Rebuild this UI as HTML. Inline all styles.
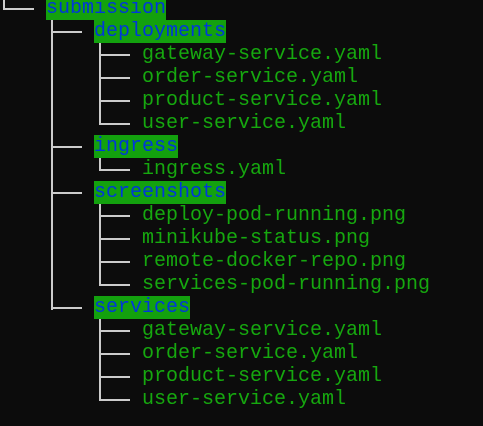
<!DOCTYPE html>
<html><head><meta charset="utf-8"><style>
html,body{margin:0;padding:0;background:#0c0c0c;width:483px;height:426px;overflow:hidden;position:relative}
.t{position:absolute;height:23px;line-height:25px;font:20px "Liberation Mono",monospace;color:#16a80f;white-space:pre}
.d{background:#13a10e;color:#0037da}
.l{position:absolute;background:#cccccc}
</style></head><body>
<div class="l" style="left:3px;top:0;width:2px;height:10px"></div>
<div class="l" style="left:3px;top:8px;width:31px;height:2px"></div>
<div class="t d" style="left:46px;top:-3px">submission</div>
<div class="l" style="left:51px;top:20px;width:2px;height:290px"></div>
<div id="g"></div>
<script>
var rows=[[1,1,'deployments'],[2,2,'gateway-service.yaml'],[3,2,'order-service.yaml'],[4,2,'product-service.yaml'],[5,2,'user-service.yaml'],
[6,1,'ingress'],[7,2,'ingress.yaml'],[8,1,'screenshots'],[9,2,'deploy-pod-running.png'],[10,2,'minikube-status.png'],[11,2,'remote-docker-repo.png'],[12,2,'services-pod-running.png'],
[13,1,'services'],[14,2,'gateway-service.yaml'],[15,2,'order-service.yaml'],[16,2,'product-service.yaml'],[17,2,'user-service.yaml']];
var h='';
rows.forEach(function(r){var top=-3+23*r[0];var lx=r[1]==1?51:99;var tx=r[1]==1?94:142;
h+='<div class="l" style="left:'+lx+'px;top:'+(top+11)+'px;width:31px;height:2px"></div>';
h+='<div class="t'+(r[1]==1?' d':'')+'" style="left:'+tx+'px;top:'+top+'px">'+r[2]+'</div>';});
[[1,5],[6,7],[8,12],[13,17]].forEach(function(p){var a=-3+23*p[0]+23,b=-3+23*p[1]+13;h+='<div class="l" style="left:99px;top:'+a+'px;width:2px;height:'+(b-a)+'px"></div>';});
document.getElementById('g').innerHTML=h;
</script>
</body></html>
